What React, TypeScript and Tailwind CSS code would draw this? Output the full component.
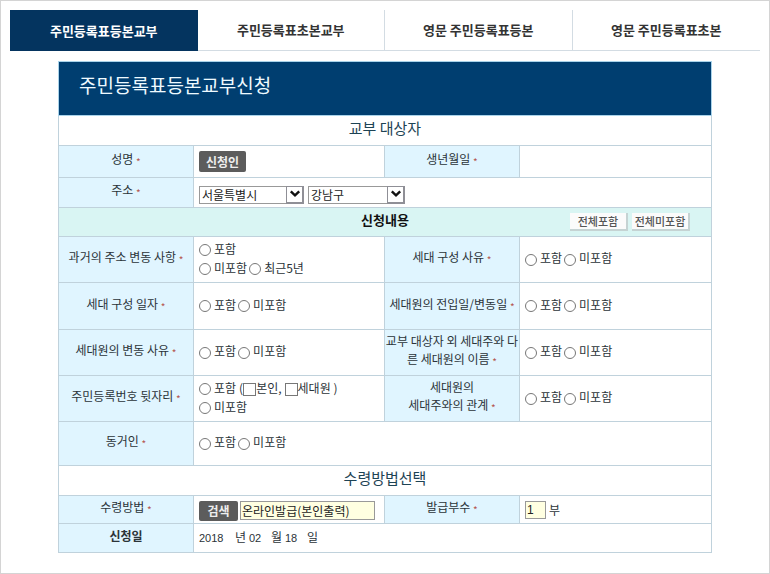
import type { ReactNode } from "react";

const tabs = ["주민등록표등본교부", "주민등록표초본교부", "영문 주민등록표등본", "영문 주민등록표초본"];

function Star() {
  return <span className="align-[-2px] text-[10px] leading-none text-[#b5564f]">*</span>;
}

function LabelCell({ children, required = true }: { children: ReactNode; required?: boolean }) {
  return (
    <th
      scope="row"
      className={
        "border border-[#c0d2dc] bg-[#e0f5ff] p-0 pb-[5px] text-center align-middle text-xs leading-[18px] text-[#2b3338] " +
        (required ? "font-normal" : "font-bold")
      }
    >
      {children}
      {required && (
        <>
          {" "}
          <Star />
        </>
      )}
    </th>
  );
}

function ValueCell({ children, span = 1 }: { children?: ReactNode; span?: number }) {
  return (
    <td colSpan={span} className="border border-[#c0d2dc] bg-white p-0 pl-[5px] align-middle">
      {children}
    </td>
  );
}

function Radio({ name, label }: { name: string; label: string }) {
  return (
    <label className="flex items-center gap-[3px]">
      <input
        type="radio"
        name={name}
        className="size-3 shrink-0 appearance-none rounded-full border border-[#777] bg-white checked:border-4"
      />
      <span className="pb-[3px]">{label}</span>
    </label>
  );
}

function Check({ label }: { label: string }) {
  return (
    <label className="flex items-center">
      <input
        type="checkbox"
        className="size-[13px] shrink-0 appearance-none border border-[#777] bg-white checked:bg-[#555]"
      />
      <span className="pb-[3px]">{label}</span>
    </label>
  );
}

function YesNo({ name }: { name: string }) {
  return (
    <div className="flex gap-[2px] leading-[18px]">
      <Radio name={name} label="포함" />
      <Radio name={name} label="미포함" />
    </div>
  );
}

function Select({ label, options, width }: { label: string; options: string[]; width: string }) {
  return (
    <div className={"relative h-[18px] " + width}>
      <select
        aria-label={label}
        className="block h-full w-full appearance-none border border-[#999] bg-white pb-px pl-[2px] text-xs leading-4 text-[#222]"
      >
        {options.map((o) => (
          <option key={o}>{o}</option>
        ))}
      </select>
      <span className="pointer-events-none absolute inset-y-0 right-0 flex w-[18px] items-center justify-center border border-r-2 border-b-2 border-[#8f8f96] bg-white">
        <svg viewBox="0 0 12 8" className="h-2 w-3" fill="none" stroke="#111" strokeWidth="2.4">
          <path d="M1.8 1.3 6 5.4l4.2-4.1" />
        </svg>
      </span>
    </div>
  );
}

function SectionRow({ children }: { children: ReactNode }) {
  return (
    <tr className="h-[30px]">
      <th
        colSpan={4}
        className="border border-[#c0d2dc] bg-white p-0 pb-[5px] text-center align-middle text-[15px] leading-5 font-normal text-[#1d4354]"
      >
        {children}
      </th>
    </tr>
  );
}

const darkButton = "rounded-[2px] bg-[#5c5c5c] text-center text-xs font-bold text-[#eee]";
const lightButton =
  "h-[18px] w-[58px] border-r-2 border-b-2 border-[#c5d3d3] bg-[#fbfbfb] text-[11px] leading-4 font-medium text-[#555]";
const dateNumber = "pt-px font-['Liberation_Sans',sans-serif] text-[11px]";

export default function App() {
  return (
    <main className="border border-[#d4d4d4] bg-white p-[9px] pb-5 font-['Noto_Sans_CJK_KR','Liberation_Sans',sans-serif] text-xs text-[#2b3338]">
      <nav className="grid grid-cols-4">
        {tabs.map((t, i) => (
          <a
            key={t}
            href="#form"
            className={
              "flex h-[41px] items-center justify-center text-[13px] leading-5 font-bold " +
              (i === 0
                ? "bg-[#04345f] text-white"
                : "border-b border-[#d3dce3] text-[#333] not-last:border-r")
            }
          >
            {t}
          </a>
        ))}
      </nav>

      <form id="form" className="mx-12 mt-[10px]">
        <table className="w-full table-fixed border-collapse">
          <colgroup>
            <col className="w-[135px]" />
            <col />
            <col className="w-[135px]" />
            <col className="w-[192px]" />
          </colgroup>
          <tbody>
            <tr className="h-[54px]">
              <th
                colSpan={4}
                className="border border-[#a9d3ea] bg-[#003e70] p-0 pb-2 pl-5 text-left align-middle text-[19px] leading-7 font-normal text-[#eefaff]"
              >
                주민등록표등본교부신청
              </th>
            </tr>
            <SectionRow>교부 대상자</SectionRow>
            <tr className="h-8">
              <LabelCell>성명</LabelCell>
              <ValueCell>
                <button type="button" className={darkButton + " block h-[21px] w-[47px] leading-5"}>
                  신청인
                </button>
              </ValueCell>
              <LabelCell>생년월일</LabelCell>
              <ValueCell />
            </tr>
            <tr className="h-[30px]">
              <LabelCell>주소</LabelCell>
              <ValueCell span={3}>
                <div className="flex gap-1 pt-1">
                  <Select label="시도" options={["서울특별시"]} width="w-[105px]" />
                  <Select label="시군구" options={["강남구"]} width="w-[97px]" />
                </div>
              </ValueCell>
            </tr>
            <tr className="h-[29px]">
              <th colSpan={4} className="border border-[#c0d2dc] bg-[#d9f5f3] p-0 align-middle">
                <div className="grid grid-cols-[1fr_auto_1fr] items-center">
                  <span className="col-start-2 pb-[5px] text-[13px] leading-[18px] font-bold text-[#111]">
                    신청내용
                  </span>
                  <span className="flex justify-end gap-1 pr-[21px]">
                    <button type="button" className={lightButton}>
                      전체포함
                    </button>
                    <button type="button" className={lightButton}>
                      전체미포함
                    </button>
                  </span>
                </div>
              </th>
            </tr>
            <tr className="h-[46px]">
              <LabelCell>과거의 주소 변동 사항</LabelCell>
              <ValueCell>
                <div className="leading-4">
                  <Radio name="address-history" label="포함" />
                  <div className="flex gap-[2px]">
                    <Radio name="address-history" label="미포함" />
                    <Radio name="address-history" label="최근5년" />
                  </div>
                </div>
              </ValueCell>
              <LabelCell>세대 구성 사유</LabelCell>
              <ValueCell>
                <YesNo name="household-reason" />
              </ValueCell>
            </tr>
            <tr className="h-[47px]">
              <LabelCell>세대 구성 일자</LabelCell>
              <ValueCell>
                <YesNo name="household-date" />
              </ValueCell>
              <LabelCell>세대원의 전입일/변동일</LabelCell>
              <ValueCell>
                <YesNo name="member-date" />
              </ValueCell>
            </tr>
            <tr className="h-[46px]">
              <LabelCell>세대원의 변동 사유</LabelCell>
              <ValueCell>
                <YesNo name="member-reason" />
              </ValueCell>
              <LabelCell>
                교부 대상자 외 세대주와 다
                <br />른 세대원의 이름
              </LabelCell>
              <ValueCell>
                <YesNo name="other-name" />
              </ValueCell>
            </tr>
            <tr className="h-[46px]">
              <LabelCell>주민등록번호 뒷자리</LabelCell>
              <ValueCell>
                <div className="leading-4">
                  <div className="flex gap-[3px]">
                    <Radio name="id-number" label="포함" />
                    <span className="flex">
                      (<Check label="본인," />
                    </span>
                    <Check label="세대원 )" />
                  </div>
                  <Radio name="id-number" label="미포함" />
                </div>
              </ValueCell>
              <LabelCell>
                세대원의
                <br />
                세대주와의 관계
              </LabelCell>
              <ValueCell>
                <YesNo name="relation" />
              </ValueCell>
            </tr>
            <tr className="h-11">
              <LabelCell>동거인</LabelCell>
              <ValueCell span={3}>
                <YesNo name="cohabitant" />
              </ValueCell>
            </tr>
            <SectionRow>수령방법선택</SectionRow>
            <tr className="h-7">
              <LabelCell>수령방법</LabelCell>
              <ValueCell>
                <div className="flex items-center gap-[2px] pt-[2px]">
                  <button type="button" className={darkButton + " h-5 w-[39px] leading-5"}>
                    검색
                  </button>
                  <input
                    aria-label="수령방법"
                    defaultValue="온라인발급(본인출력)"
                    className="h-[19px] w-[135px] border border-[#999] bg-[#ffffe1] pl-px leading-4 text-[#222]"
                  />
                </div>
              </ValueCell>
              <LabelCell>발급부수</LabelCell>
              <ValueCell>
                <label className="flex items-center gap-[3px]">
                  <input
                    defaultValue="1"
                    className="h-[18px] w-[21px] border border-[#999] bg-[#ffffe1] pl-px font-['Liberation_Sans',sans-serif] leading-4 text-[#222]"
                  />
                  부
                </label>
              </ValueCell>
            </tr>
            <tr className="h-[29px]">
              <LabelCell required={false}>신청일</LabelCell>
              <ValueCell span={3}>
                <div className="flex pb-px leading-[18px]">
                  <span className={dateNumber + " w-9"}>2018</span>
                  <span className="w-[14px]">년</span>
                  <span className={dateNumber + " w-[22px]"}>02</span>
                  <span className="w-[14px]">월</span>
                  <span className={dateNumber + " w-[22px]"}>18</span>
                  <span>일</span>
                </div>
              </ValueCell>
            </tr>
          </tbody>
        </table>
      </form>
    </main>
  );
}
